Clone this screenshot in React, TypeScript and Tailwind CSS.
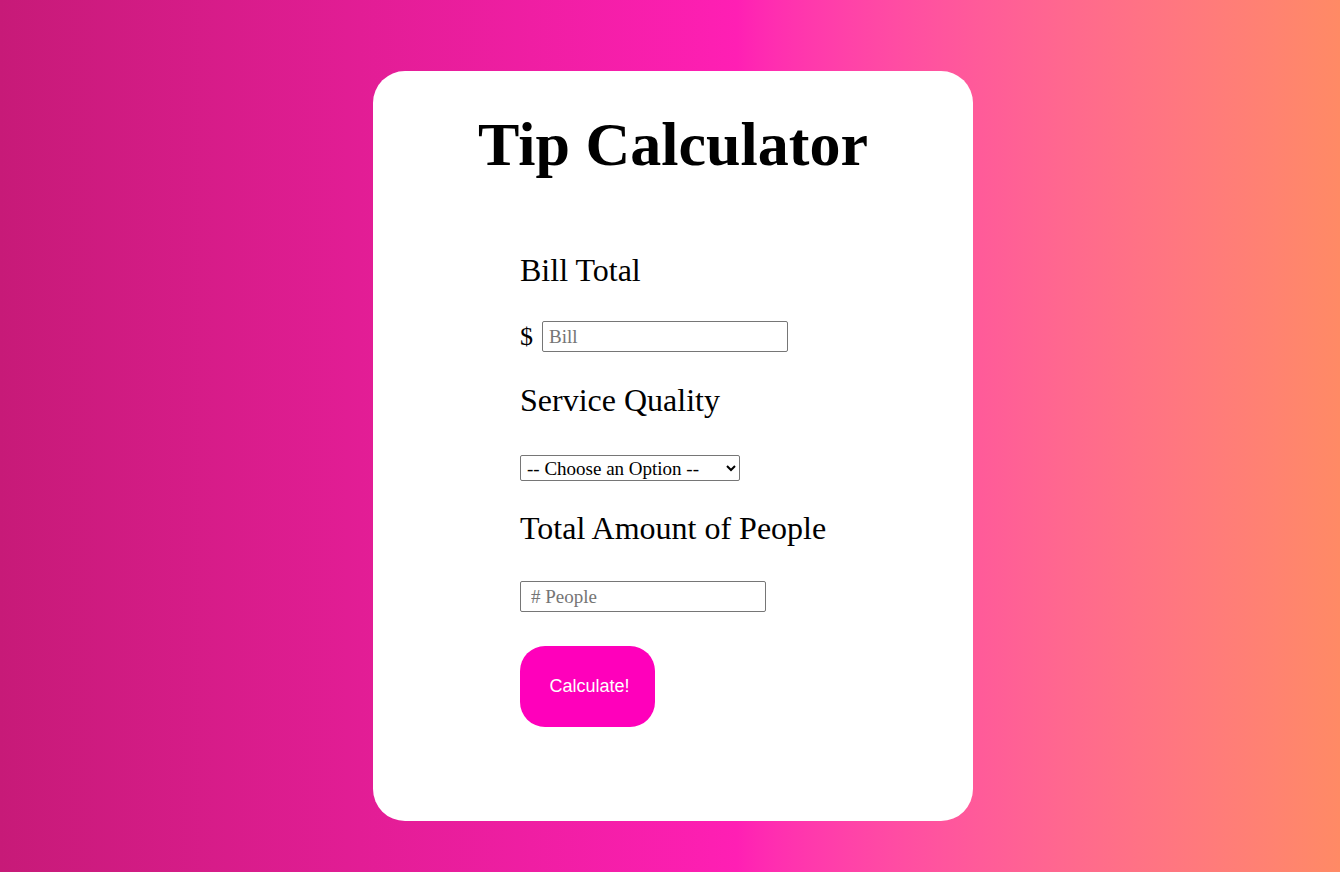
export default function App() {
  return (
    <div className="min-h-screen w-full bg-gradient-to-r from-[#c71a78] via-[#ff1fb4] via-55% to-[#ff8a65] flex justify-center pl-[6px] font-['Liberation_Serif',serif] text-black">
      <div className="mt-[71px] w-[600px] h-[750px] bg-white rounded-[32px] flex flex-col pt-[36px]">
        <h1 className="text-center text-[62px] leading-[74px] font-bold">Tip Calculator</h1>

        <div className="pl-[147px] flex flex-col">
          <label className="mt-[71px] text-[32px] leading-[36px]">Bill Total</label>
          <div className="mt-[33px] flex items-center gap-[9px]">
            <span className="text-[26px] leading-none">$</span>
            <input
              type="text"
              placeholder="Bill"
              className="w-[246px] h-[31px] border border-[#767676] rounded-[2px] px-[6px] text-[19px] placeholder:text-[#757575]"
            />
          </div>

          <label className="mt-[30px] text-[32px] leading-[36px]">Service Quality</label>
          <select className="mt-[37px] w-[220px] h-[26px] border border-[#767676] rounded-[2px] px-[2px] text-[19px] leading-none bg-white">
            <option>-- Choose an Option --</option>
            <option>30% - Outstanding</option>
            <option>20% - Good</option>
            <option>15% - It was OK</option>
            <option>10% - Bad</option>
            <option>5% - Terrible</option>
          </select>

          <label className="mt-[29px] text-[32px] leading-[36px]">Total Amount of People</label>
          <input
            type="text"
            placeholder="# People"
            className="mt-[35px] w-[246px] h-[31px] border border-[#767676] rounded-[2px] px-[10px] text-[19px] placeholder:text-[#757575]"
          />

          <button className="mt-[34px] w-[135px] h-[81px] rounded-[25px] bg-[#ff00bb] text-white text-[18px] pl-[4px] font-['Liberation_Sans',Arial,sans-serif]">
            Calculate!
          </button>
        </div>
      </div>
    </div>
  );
}
